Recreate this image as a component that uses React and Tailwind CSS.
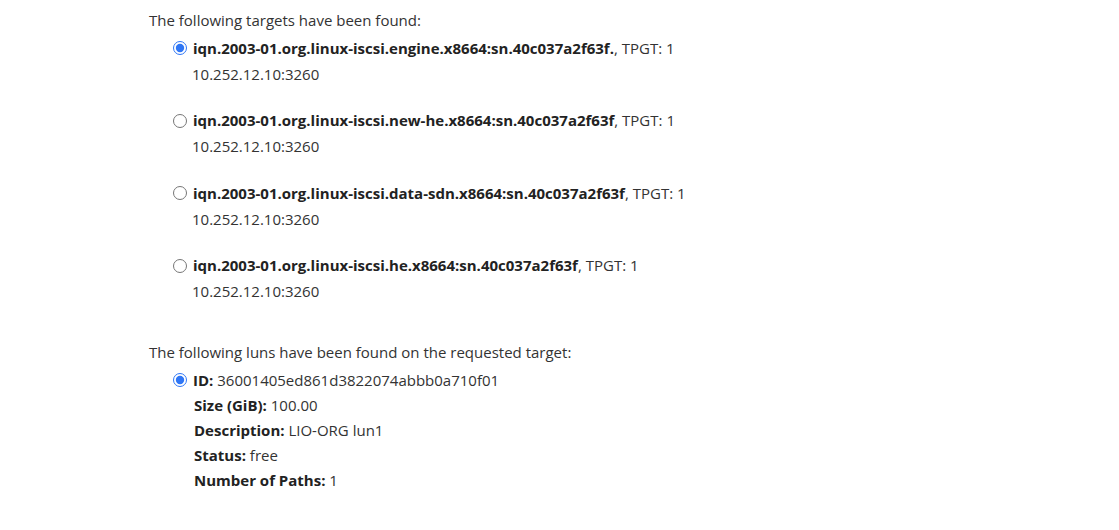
import React, { useState } from "react";

const targets = [
  { iqn: "iqn.2003-01.org.linux-iscsi.engine.x8664:sn.40c037a2f63f.", tpgt: 1, portal: "10.252.12.10:3260" },
  { iqn: "iqn.2003-01.org.linux-iscsi.new-he.x8664:sn.40c037a2f63f", tpgt: 1, portal: "10.252.12.10:3260" },
  { iqn: "iqn.2003-01.org.linux-iscsi.data-sdn.x8664:sn.40c037a2f63f", tpgt: 1, portal: "10.252.12.10:3260" },
  { iqn: "iqn.2003-01.org.linux-iscsi.he.x8664:sn.40c037a2f63f", tpgt: 1, portal: "10.252.12.10:3260" },
];

function Radio({ checked, onChange, name }) {
  return (
    <input
      type="radio"
      name={name}
      checked={checked}
      onChange={onChange}
      className="m-0 mr-[6px] h-[14px] w-[14px] shrink-0 accent-[#2f76f5]"
    />
  );
}

export default function App() {
  const [target, setTarget] = useState(0);
  const [lun, setLun] = useState(true);

  return (
    <div
      className="min-h-screen bg-white pl-[149px] pt-[10px] text-[15px] leading-[20px] text-[#333333]"
      style={{ fontFamily: '"Open Sans", "Liberation Sans", sans-serif' }}
    >
      <div>The following targets have been found:</div>
      <ul className="ml-[24px] mt-[5.5px]">
        {targets.map((t, i) => (
          <li key={t.iqn} className="mb-[21.5px]">
            <label className="flex h-[25px] items-center leading-[25px]">
              <Radio name="target" checked={target === i} onChange={() => setTarget(i)} />
              <span>
                <b className="font-bold text-[#222222]">{t.iqn}</b>, TPGT: {t.tpgt}
              </span>
            </label>
            <div className="h-[26px] pl-[19px] leading-[26px]">{t.portal}</div>
          </li>
        ))}
      </ul>

      <div className="mt-[38px]">The following luns have been found on the requested target:</div>
      <div className="ml-[24px] mt-[5.5px] leading-[25px]">
        <label className="flex h-[25px] items-center">
          <Radio name="lun" checked={lun} onChange={() => setLun(true)} />
          <span>
            <b className="font-bold text-[#222222]">ID:</b> 36001405ed861d3822074abbb0a710f01
          </span>
        </label>
        <div className="pl-[21px]">
          <div><b className="font-bold text-[#222222]">Size (GiB):</b> 100.00</div>
          <div><b className="font-bold text-[#222222]">Description:</b> LIO-ORG lun1</div>
          <div><b className="font-bold text-[#222222]">Status:</b> free</div>
          <div><b className="font-bold text-[#222222]">Number of Paths:</b> 1</div>
        </div>
      </div>
    </div>
  );
}
